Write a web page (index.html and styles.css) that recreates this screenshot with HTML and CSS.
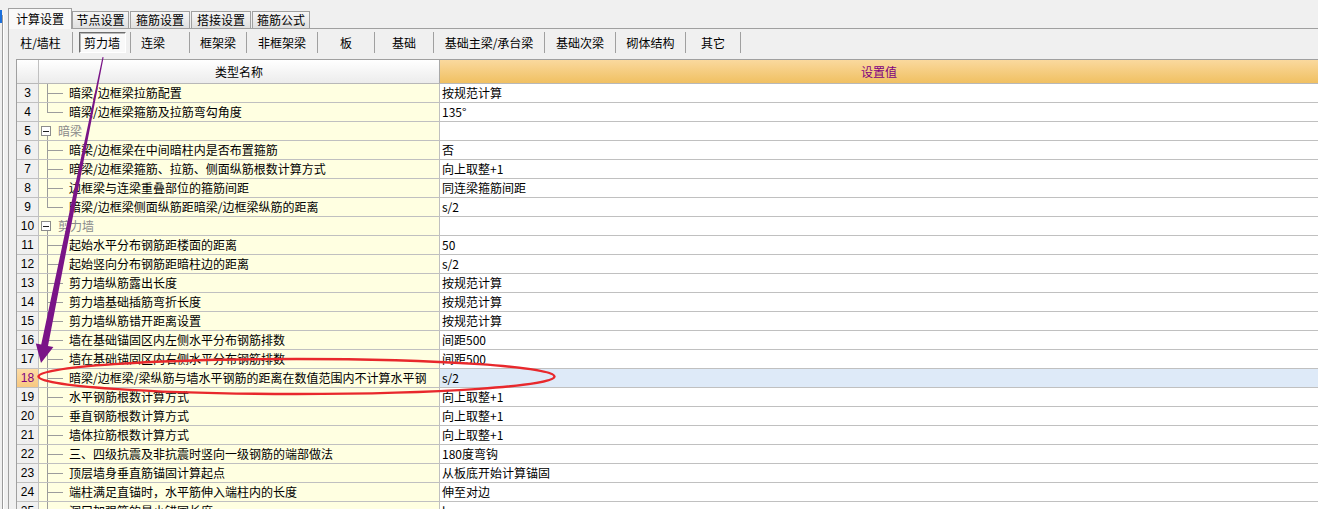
FILE: index.html
```html
<!DOCTYPE html>
<html lang="zh-CN">
<head>
<meta charset="utf-8">
<title>计算设置</title>
<link rel="stylesheet" href="styles.css">
</head>
<body>
<div class="app">
  <div class="edge"></div>
  <div class="main">
    <div class="tabs">
      <div class="tab active">计算设置</div>
      <div class="tab">节点设置</div>
      <div class="tab">箍筋设置</div>
      <div class="tab">搭接设置</div>
      <div class="tab">箍筋公式</div>
    </div>
    <div class="panel">
      <div class="toolbar">
        <div class="tb-btn">柱/墙柱</div>
        <div class="tb-btn"><span class="pressed">剪力墙</span></div>
        <div class="tb-btn tb-left">连梁</div>
        <div class="tb-btn">框架梁</div>
        <div class="tb-btn">非框架梁</div>
        <div class="tb-btn">板</div>
        <div class="tb-btn">基础</div>
        <div class="tb-btn">基础主梁/承台梁</div>
        <div class="tb-btn">基础次梁</div>
        <div class="tb-btn">砌体结构</div>
        <div class="tb-btn">其它</div>
      </div>
      <div class="grid">
        <div class="row head">
          <div class="c-num"></div>
          <div class="c-name">类型名称</div>
          <div class="c-val">设置值</div>
        </div>
        <div class="row"><div class="c-num">3</div><div class="c-name"><span class="tree"></span><span class="txt">暗梁/边框梁拉筋配置</span></div><div class="c-val">按规范计算</div></div>
        <div class="row"><div class="c-num">4</div><div class="c-name"><span class="tree last"></span><span class="txt">暗梁/边框梁箍筋及拉筋弯勾角度</span></div><div class="c-val">135°</div></div>
        <div class="row"><div class="c-num">5</div><div class="c-name"><span class="gtree"><span class="box"></span></span><span class="gtxt">暗梁</span></div><div class="c-val"></div></div>
        <div class="row"><div class="c-num">6</div><div class="c-name"><span class="tree"></span><span class="txt">暗梁/边框梁在中间暗柱内是否布置箍筋</span></div><div class="c-val">否</div></div>
        <div class="row"><div class="c-num">7</div><div class="c-name"><span class="tree"></span><span class="txt">暗梁/边框梁箍筋、拉筋、侧面纵筋根数计算方式</span></div><div class="c-val">向上取整+1</div></div>
        <div class="row"><div class="c-num">8</div><div class="c-name"><span class="tree"></span><span class="txt">边框梁与连梁重叠部位的箍筋间距</span></div><div class="c-val">同连梁箍筋间距</div></div>
        <div class="row"><div class="c-num">9</div><div class="c-name"><span class="tree last"></span><span class="txt">暗梁/边框梁侧面纵筋距暗梁/边框梁纵筋的距离</span></div><div class="c-val">s/2</div></div>
        <div class="row"><div class="c-num">10</div><div class="c-name"><span class="gtree"><span class="box"></span></span><span class="gtxt">剪力墙</span></div><div class="c-val"></div></div>
        <div class="row"><div class="c-num">11</div><div class="c-name"><span class="tree"></span><span class="txt">起始水平分布钢筋距楼面的距离</span></div><div class="c-val">50</div></div>
        <div class="row"><div class="c-num">12</div><div class="c-name"><span class="tree"></span><span class="txt">起始竖向分布钢筋距暗柱边的距离</span></div><div class="c-val">s/2</div></div>
        <div class="row"><div class="c-num">13</div><div class="c-name"><span class="tree"></span><span class="txt">剪力墙纵筋露出长度</span></div><div class="c-val">按规范计算</div></div>
        <div class="row"><div class="c-num">14</div><div class="c-name"><span class="tree"></span><span class="txt">剪力墙基础插筋弯折长度</span></div><div class="c-val">按规范计算</div></div>
        <div class="row"><div class="c-num">15</div><div class="c-name"><span class="tree"></span><span class="txt">剪力墙纵筋错开距离设置</span></div><div class="c-val">按规范计算</div></div>
        <div class="row"><div class="c-num">16</div><div class="c-name"><span class="tree"></span><span class="txt">墙在基础锚固区内左侧水平分布钢筋排数</span></div><div class="c-val">间距500</div></div>
        <div class="row"><div class="c-num">17</div><div class="c-name"><span class="tree"></span><span class="txt">墙在基础锚固区内右侧水平分布钢筋排数</span></div><div class="c-val">间距500</div></div>
        <div class="row selected"><div class="c-num">18</div><div class="c-name"><span class="tree"></span><span class="txt">暗梁/边框梁/梁纵筋与墙水平钢筋的距离在数值范围内不计算水平钢</span></div><div class="c-val">s/2</div></div>
        <div class="row"><div class="c-num">19</div><div class="c-name"><span class="tree"></span><span class="txt">水平钢筋根数计算方式</span></div><div class="c-val">向上取整+1</div></div>
        <div class="row"><div class="c-num">20</div><div class="c-name"><span class="tree"></span><span class="txt">垂直钢筋根数计算方式</span></div><div class="c-val">向上取整+1</div></div>
        <div class="row"><div class="c-num">21</div><div class="c-name"><span class="tree"></span><span class="txt">墙体拉筋根数计算方式</span></div><div class="c-val">向上取整+1</div></div>
        <div class="row"><div class="c-num">22</div><div class="c-name"><span class="tree"></span><span class="txt">三、四级抗震及非抗震时竖向一级钢筋的端部做法</span></div><div class="c-val">180度弯钩</div></div>
        <div class="row"><div class="c-num">23</div><div class="c-name"><span class="tree"></span><span class="txt">顶层墙身垂直筋锚固计算起点</span></div><div class="c-val">从板底开始计算锚固</div></div>
        <div class="row"><div class="c-num">24</div><div class="c-name"><span class="tree"></span><span class="txt">端柱满足直锚时，水平筋伸入端柱内的长度</span></div><div class="c-val">伸至对边</div></div>
        <div class="row"><div class="c-num">25</div><div class="c-name"><span class="tree"></span><span class="txt">洞口加强筋的最小锚固长度</span></div><div class="c-val">la</div></div>
      </div>
    </div>
  </div>
</div>
<svg class="overlay" width="1318" height="509" viewBox="0 0 1318 509">
  <polygon class="arrow" points="102.5,57 103.6,57.2 48,346 53.4,347.1 41,363 35.8,343.5 41.2,344.6"/>
  <ellipse class="ring" cx="296.5" cy="376.5" rx="258" ry="17.5"/>
</svg>
</body>
</html>
```
FILE: styles.css
```css
html, body {
  margin: 0;
  padding: 0;
}
body {
  width: 1318px;
  height: 509px;
  overflow: hidden;
  position: relative;
  background: #f0f0f0;
  color: #000;
  font-family: "Noto Sans CJK SC", "Liberation Sans", sans-serif;
  font-size: 12px;
  line-height: 18px;
}
.app {
  display: flex;
  height: 509px;
}
.edge {
  width: 8px;
  flex: none;
  background:
    linear-gradient(#1a6fdc, #1a6fdc) 0 10px / 2px 13px no-repeat,
    linear-gradient(#9a9a9a, #9a9a9a) 2px 15px / 1px 100% no-repeat,
    linear-gradient(#ffffff, #ffffff) 3px 15px / 1px 100% no-repeat;
}
.main {
  flex: 1;
  min-width: 0;
  display: flex;
  flex-direction: column;
}

/* tabs */
.tabs {
  height: 28px;
  display: flex;
  align-items: flex-end;
  flex: none;
}
.tab {
  box-sizing: border-box;
  height: 17px;
  width: 58px;
  margin-left: 1px;
  border: 1px solid #a0a0a0;
  border-bottom: none;
  background: linear-gradient(#f6f6f6, #e0e0e0);
  text-align: center;
  line-height: 16px;
  position: relative;
  z-index: 1;
}
.tab:nth-child(2) { width: 57px; margin-left: 0; }
.tab:nth-child(3) { width: 60px; }
.tab:nth-child(4) { width: 60px; }
.tab:nth-child(5) { width: 58px; }
.tab.active {
  width: 64px;
  height: 21px;
  margin: 0 0 -1px 0;
  background: #f9f9f9;
  line-height: 19px;
  z-index: 2;
}

/* panel */
.panel {
  flex: 1;
  min-height: 0;
  display: flex;
  flex-direction: column;
  border-top: 1px solid #a0a0a0;
  border-left: 1px solid #a0a0a0;
}
.toolbar {
  flex: none;
  height: 30px;
  box-sizing: border-box;
  padding-top: 3px;
  display: flex;
  align-items: flex-start;
}
.tb-btn {
  flex: none;
  box-sizing: border-box;
  height: 21px;
  border-right: 1px solid #a0a0a0;
  display: flex;
  align-items: center;
  justify-content: center;
  white-space: nowrap;
}
.tb-btn:nth-child(1) { width: 64px; }
.tb-btn:nth-child(2) { width: 58px; }
.tb-btn:nth-child(3) { width: 59px; }
.tb-btn:nth-child(4) { width: 57px; }
.tb-btn:nth-child(5) { width: 71px; }
.tb-btn:nth-child(6) { width: 57px; }
.tb-btn:nth-child(7) { width: 59px; }
.tb-btn:nth-child(8) { width: 111px; }
.tb-btn:nth-child(9) { width: 71px; }
.tb-btn:nth-child(10) { width: 70px; }
.tb-btn:nth-child(11) { width: 55px; }
.tb-left {
  justify-content: flex-start;
  padding-left: 10px;
}
.pressed {
  box-sizing: border-box;
  width: 47px;
  height: 21px;
  margin-left: 1px;
  border: 1px solid;
  border-color: #6e6e6e #ffffff #ffffff #6e6e6e;
  box-shadow: inset 1px 1px 0 #b8b8b8;
  background: #f9f9f9;
  display: flex;
  align-items: center;
  justify-content: center;
}

/* grid */
.grid {
  flex: 1;
  margin-left: 7px;
  border-top: 1px solid #a0a0a0;
  border-left: 1px solid #a0a0a0;
  overflow: hidden;
}
.row {
  display: grid;
  grid-template-columns: 22px 401px 1fr;
  height: 19px;
}
.row > div {
  box-sizing: border-box;
  border-bottom: 1px solid #c0c0c0;
  border-right: 1px solid #c0c0c0;
  overflow: hidden;
  white-space: nowrap;
}
.c-num {
  background: #f0f0f0;
  text-align: center;
  font-family: "Liberation Sans", sans-serif;
  font-size: 12px;
  color: #000;
}
.c-name {
  background: #ffffe1;
  display: flex;
  align-items: stretch;
}
.c-val {
  background: #ffffff;
  padding-left: 2px;
  border-right: none !important;
}
.tree {
  flex: none;
  width: 30px;
  background:
    linear-gradient(#9c9c9c, #9c9c9c) 8px 0 / 1px 100% no-repeat,
    linear-gradient(#9c9c9c, #9c9c9c) 9px 9px / 15px 1px no-repeat;
}
.tree.last {
  background:
    linear-gradient(#9c9c9c, #9c9c9c) 8px 0 / 1px 10px no-repeat,
    linear-gradient(#9c9c9c, #9c9c9c) 9px 9px / 15px 1px no-repeat;
}
.gtree {
  flex: none;
  width: 19px;
  display: flex;
  align-items: flex-start;
  background: linear-gradient(#9c9c9c, #9c9c9c) 8px 13px / 1px 6px no-repeat;
}
.box {
  box-sizing: border-box;
  width: 10px;
  height: 10px;
  margin: 4px 0 0 2px;
  border: 1px solid #8c8c8c;
  background: linear-gradient(#202020, #202020) center / 6px 1px no-repeat, #ffffff;
}
.gtxt {
  color: #8a8a8a;
}

/* header */
.row.head {
  height: 24px;
}
.row.head > div {
  line-height: 23px;
  border-bottom-color: #b8b8b8;
}
.row.head .c-num {
  background: linear-gradient(#ffffff, #ebebeb);
}
.row.head .c-name {
  display: block;
  text-align: center;
  background: linear-gradient(#ffffff, #ececec);
  border-right-color: #a8a8a8;
}
.row.head .c-val {
  text-align: center;
  padding-left: 0;
  color: #800080;
  background: linear-gradient(#fad99e, #f0c062);
}

/* selected row */
.row.selected .c-num {
  background: linear-gradient(#fddca6, #f8c880);
  color: #800080;
}
.row.selected .c-val {
  background: #deeaf8;
}

/* annotation overlay */
.overlay {
  position: absolute;
  left: 0;
  top: 0;
  pointer-events: none;
}
.arrow {
  fill: #7a1487;
}
.ring {
  fill: none;
  stroke: #e8282c;
  stroke-width: 2.5;
}
```
